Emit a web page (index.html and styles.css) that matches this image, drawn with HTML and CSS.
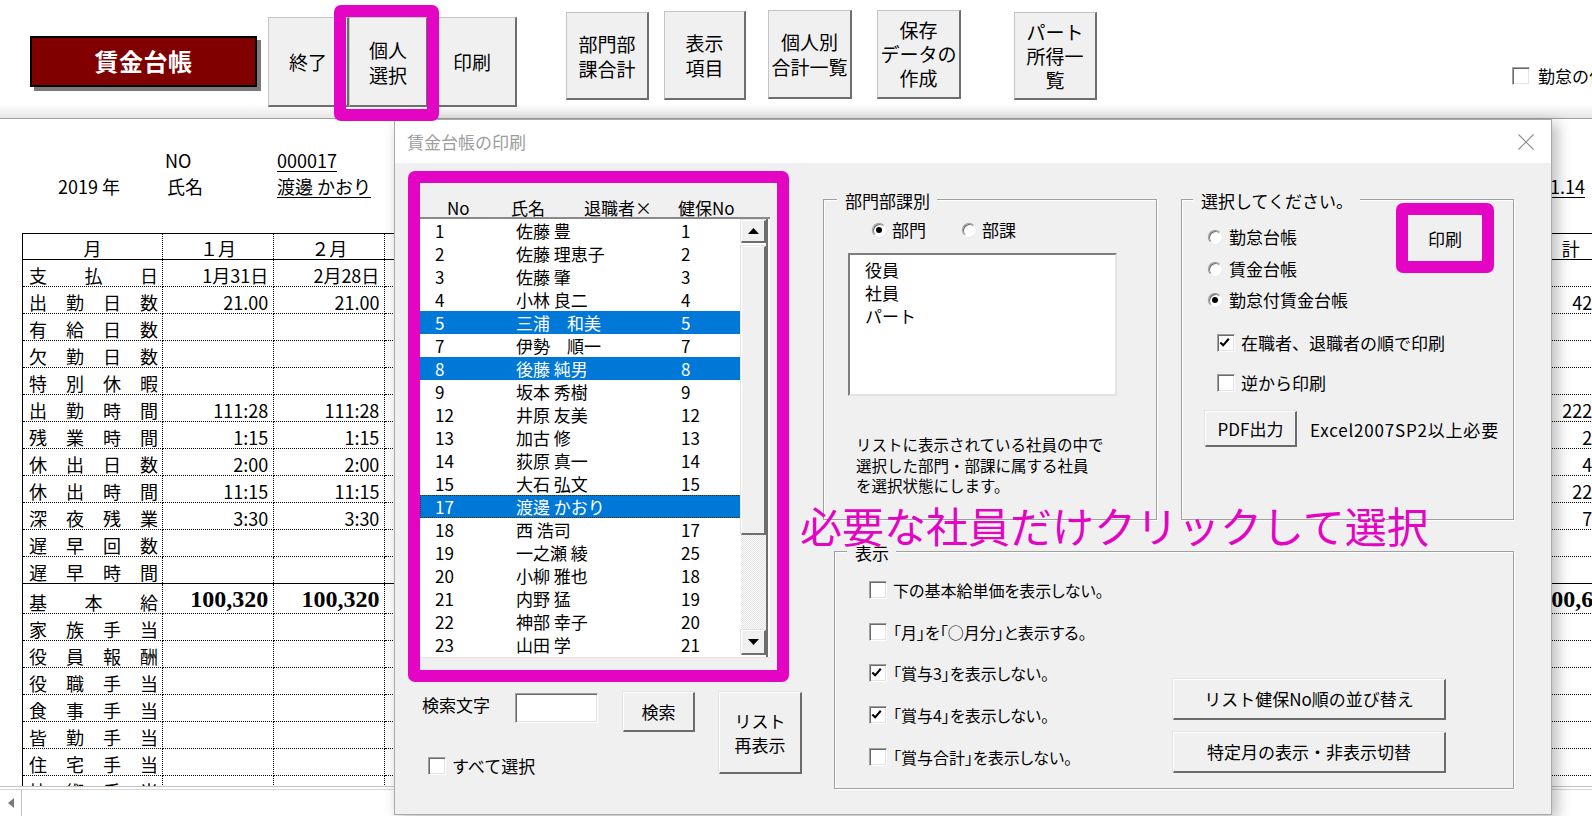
FILE: index.html
```html
<!DOCTYPE html>
<html lang="ja">
<head>
<meta charset="utf-8">
<title>賃金台帳</title>
<link rel="stylesheet" href="styles.css">
</head>
<body>
<div class="app">
  <header class="toolbar">
    <div class="title-badge">賃金台帳</div>
    <div class="tb-group">
      <button class="tb-btn w81">終了</button>
      <button class="tb-btn w79">個人<br>選択</button>
      <button class="tb-btn w89">印刷</button>
    </div>
    <button class="tb-btn b-bumon">部門部<br>課合計</button>
    <button class="tb-btn b-hyoji">表示<br>項目</button>
    <button class="tb-btn b-kojin">個人別<br>合計一覧</button>
    <button class="tb-btn b-hozon">保存<br>データの<br>作成</button>
    <button class="tb-btn b-part">パート<br>所得一<br>覧</button>
    <label class="top-check"><span class="cb"></span><span class="top-check-text">勤怠の付加表示</span></label>
  </header>

  <main class="sheet">
    <div class="sheet-head">
      <div class="sh-row"><span class="sh-no">NO</span><span class="u">000017</span></div>
      <div class="sh-row"><span class="sh-year">2019 年</span><span class="sh-name-l">氏名</span><span class="u">渡邊 かおり</span><span class="u sh-date">2019.11.14</span></div>
    </div>
    <table class="ledger">
      <colgroup>
        <col class="c-label"><col class="c-m"><col class="c-m"><col class="c-m"><col class="c-m"><col class="c-m"><col class="c-m"><col class="c-m"><col class="c-m"><col class="c-m"><col class="c-m"><col class="c-m"><col class="c-m"><col class="c-total">
      </colgroup>
      <thead>
        <tr><th>月</th><th>１月</th><th>２月</th><th>３月</th><th>４月</th><th>５月</th><th>６月</th><th>７月</th><th>８月</th><th>９月</th><th>10月</th><th>11月</th><th>12月</th><th class="th-total">合　計</th></tr>
      </thead>
      <tbody>
        <tr><td class="lbl">支払日</td><td class="num">1月31日</td><td class="num">2月28日</td><td></td><td></td><td></td><td></td><td></td><td></td><td></td><td></td><td></td><td></td><td class="num"></td></tr>
        <tr><td class="lbl">出勤日数</td><td class="num">21.00</td><td class="num">21.00</td><td></td><td></td><td></td><td></td><td></td><td></td><td></td><td></td><td></td><td></td><td class="num">42.00</td></tr>
        <tr><td class="lbl">有給日数</td><td></td><td></td><td></td><td></td><td></td><td></td><td></td><td></td><td></td><td></td><td></td><td></td><td></td></tr>
        <tr><td class="lbl">欠勤日数</td><td></td><td></td><td></td><td></td><td></td><td></td><td></td><td></td><td></td><td></td><td></td><td></td><td></td></tr>
        <tr><td class="lbl">特別休暇</td><td></td><td></td><td></td><td></td><td></td><td></td><td></td><td></td><td></td><td></td><td></td><td></td><td></td></tr>
        <tr><td class="lbl">出勤時間</td><td class="num">111:28</td><td class="num">111:28</td><td></td><td></td><td></td><td></td><td></td><td></td><td></td><td></td><td></td><td></td><td class="num">222:56</td></tr>
        <tr><td class="lbl">残業時間</td><td class="num">1:15</td><td class="num">1:15</td><td></td><td></td><td></td><td></td><td></td><td></td><td></td><td></td><td></td><td></td><td class="num">2:30</td></tr>
        <tr><td class="lbl">休出日数</td><td class="num">2:00</td><td class="num">2:00</td><td></td><td></td><td></td><td></td><td></td><td></td><td></td><td></td><td></td><td></td><td class="num">4:00</td></tr>
        <tr><td class="lbl">休出時間</td><td class="num">11:15</td><td class="num">11:15</td><td></td><td></td><td></td><td></td><td></td><td></td><td></td><td></td><td></td><td></td><td class="num">22:30</td></tr>
        <tr><td class="lbl">深夜残業</td><td class="num">3:30</td><td class="num">3:30</td><td></td><td></td><td></td><td></td><td></td><td></td><td></td><td></td><td></td><td></td><td class="num">7:00</td></tr>
        <tr><td class="lbl">遅早回数</td><td></td><td></td><td></td><td></td><td></td><td></td><td></td><td></td><td></td><td></td><td></td><td></td><td></td></tr>
        <tr><td class="lbl">遅早時間</td><td></td><td></td><td></td><td></td><td></td><td></td><td></td><td></td><td></td><td></td><td></td><td></td><td></td></tr>
        <tr class="kihon"><td class="lbl">基本給</td><td class="num money">100,320</td><td class="num money">100,320</td><td></td><td></td><td></td><td></td><td></td><td></td><td></td><td></td><td></td><td></td><td class="num money">200,640</td></tr>
        <tr><td class="lbl">家族手当</td><td></td><td></td><td></td><td></td><td></td><td></td><td></td><td></td><td></td><td></td><td></td><td></td><td></td></tr>
        <tr><td class="lbl">役員報酬</td><td></td><td></td><td></td><td></td><td></td><td></td><td></td><td></td><td></td><td></td><td></td><td></td><td></td></tr>
        <tr><td class="lbl">役職手当</td><td></td><td></td><td></td><td></td><td></td><td></td><td></td><td></td><td></td><td></td><td></td><td></td><td></td></tr>
        <tr><td class="lbl">食事手当</td><td></td><td></td><td></td><td></td><td></td><td></td><td></td><td></td><td></td><td></td><td></td><td></td><td></td></tr>
        <tr><td class="lbl">皆勤手当</td><td></td><td></td><td></td><td></td><td></td><td></td><td></td><td></td><td></td><td></td><td></td><td></td><td></td></tr>
        <tr><td class="lbl">住宅手当</td><td></td><td></td><td></td><td></td><td></td><td></td><td></td><td></td><td></td><td></td><td></td><td></td><td></td></tr>
        <tr><td class="lbl">技術手当</td><td></td><td></td><td></td><td></td><td></td><td></td><td></td><td></td><td></td><td></td><td></td><td></td><td></td></tr>
      </tbody>
    </table>
  </main>

  <footer class="hscroll">
    <span class="hs-left"><svg width="6" height="10" viewBox="0 0 6 10"><path d="M6 0 L0 5 L6 10Z" fill="#7a7a7a"/></svg></span>
    <span class="hs-track"></span>
  </footer>

  <div class="hl-ring hl-kojin"></div>

  <section class="dialog">
    <div class="dlg-title">
      <span class="dlg-title-text">賃金台帳の印刷</span>
      <span class="dlg-close"><svg width="16" height="16" viewBox="0 0 16 16"><path d="M0.5 0.5 L15.5 15.5 M15.5 0.5 L0.5 15.5" stroke="#8c8c8c" stroke-width="1.1" fill="none"/></svg></span>
    </div>
    <div class="dlg-body">
      <div class="col-left">
        <div class="ring list-ring">
          <div class="list-head"><span class="h-no">No</span><span class="h-name">氏名</span><span class="h-ret">退職者×</span><span class="h-kp">健保No</span></div>
          <div class="listbox">
            <div class="rows">
              <div class="row"><span class="c1">1</span><span class="c2">佐藤 豊</span><span class="c3">1</span></div>
              <div class="row"><span class="c1">2</span><span class="c2">佐藤 理恵子</span><span class="c3">2</span></div>
              <div class="row"><span class="c1">3</span><span class="c2">佐藤 肇</span><span class="c3">3</span></div>
              <div class="row"><span class="c1">4</span><span class="c2">小林 良二</span><span class="c3">4</span></div>
              <div class="row sel"><span class="c1">5</span><span class="c2">三浦　和美</span><span class="c3">5</span></div>
              <div class="row"><span class="c1">7</span><span class="c2">伊勢　順一</span><span class="c3">7</span></div>
              <div class="row sel"><span class="c1">8</span><span class="c2">後藤 純男</span><span class="c3">8</span></div>
              <div class="row"><span class="c1">9</span><span class="c2">坂本 秀樹</span><span class="c3">9</span></div>
              <div class="row"><span class="c1">12</span><span class="c2">井原 友美</span><span class="c3">12</span></div>
              <div class="row"><span class="c1">13</span><span class="c2">加古 修</span><span class="c3">13</span></div>
              <div class="row"><span class="c1">14</span><span class="c2">荻原 真一</span><span class="c3">14</span></div>
              <div class="row"><span class="c1">15</span><span class="c2">大石 弘文</span><span class="c3">15</span></div>
              <div class="row sel focus"><span class="c1">17</span><span class="c2">渡邊 かおり</span><span class="c3"></span></div>
              <div class="row"><span class="c1">18</span><span class="c2">西 浩司</span><span class="c3">17</span></div>
              <div class="row"><span class="c1">19</span><span class="c2">一之瀬 綾</span><span class="c3">25</span></div>
              <div class="row"><span class="c1">20</span><span class="c2">小柳 雅也</span><span class="c3">18</span></div>
              <div class="row"><span class="c1">21</span><span class="c2">内野 猛</span><span class="c3">19</span></div>
              <div class="row"><span class="c1">22</span><span class="c2">神部 幸子</span><span class="c3">20</span></div>
              <div class="row"><span class="c1">23</span><span class="c2">山田 学</span><span class="c3">21</span></div>
            </div>
            <div class="vscroll">
              <div class="sb-btn sb-up"><svg width="11" height="6" viewBox="0 0 11 6"><path d="M0 6 L5.5 0 L11 6Z" fill="#000"/></svg></div>
              <div class="sb-thumb"></div>
              <div class="sb-track"></div>
              <div class="sb-btn sb-down"><svg width="11" height="6" viewBox="0 0 11 6"><path d="M0 0 L5.5 6 L11 0Z" fill="#000"/></svg></div>
            </div>
          </div>
        </div>
        <div class="search">
          <div class="search-main">
            <div class="search-line">
              <span class="lbl-search">検索文字</span>
              <span class="textbox"></span>
              <button class="btn btn-search">検索</button>
            </div>
            <label class="check check-all"><span class="cb"></span><span class="check-text">すべて選択</span></label>
          </div>
          <button class="btn btn-relist">リスト<br>再表示</button>
        </div>
      </div>

      <div class="col-right">
        <div class="groups-top">
          <div class="group g-bumon">
            <div class="legend lg-bumon">部門部課別</div>
            <div class="radio-row">
              <label class="radio r-bumon"><span class="rb on"></span>部門</label>
              <label class="radio"><span class="rb"></span>部課</label>
            </div>
            <div class="dept-list">
              <div class="dept-item">役員</div>
              <div class="dept-item">社員</div>
              <div class="dept-item">パート</div>
            </div>
            <p class="desc">リストに表示されている社員の中で<br>選択した部門・部課に属する社員<br>を選択状態にします。</p>
          </div>
          <div class="group g-select">
            <div class="legend lg-select">選択してください。</div>
            <div class="sel-top">
              <div class="sel-radios">
                <label class="radio sel-radio"><span class="rb"></span>勤怠台帳</label>
                <label class="radio sel-radio"><span class="rb"></span>賃金台帳</label>
                <label class="radio sel-radio"><span class="rb on"></span>勤怠付賃金台帳</label>
              </div>
              <div class="ring ring-print"><div class="print-btn">印刷</div></div>
            </div>
            <label class="check chk-row chk-1"><span class="cb on"><svg width="16" height="16" viewBox="0 0 16 16"><path d="M2.5 7.5 L5.5 10.5 L11.5 3.5" fill="none" stroke="#000" stroke-width="2.2"/></svg></span><span class="check-text">在職者、退職者の順で印刷</span></label>
            <label class="check chk-row chk-2"><span class="cb"></span><span class="check-text">逆から印刷</span></label>
            <div class="pdf-row">
              <button class="btn btn-pdf">PDF出力</button>
              <span class="excel">Excel2007SP2以上必要</span>
            </div>
          </div>
        </div>

        <div class="group g-view">
          <div class="legend lg-view">表示</div>
          <div class="view-body">
            <div class="view-checks">
              <label class="check view-check"><span class="cb"></span><span class="check-text">下の基本給単価を表示しない。</span></label>
              <label class="check view-check"><span class="cb"></span><span class="check-text">「月」を「○月分」と表示する。</span></label>
              <label class="check view-check"><span class="cb on"><svg width="16" height="16" viewBox="0 0 16 16"><path d="M2.5 7.5 L5.5 10.5 L11.5 3.5" fill="none" stroke="#000" stroke-width="2.2"/></svg></span><span class="check-text">「賞与3」を表示しない。</span></label>
              <label class="check view-check"><span class="cb on"><svg width="16" height="16" viewBox="0 0 16 16"><path d="M2.5 7.5 L5.5 10.5 L11.5 3.5" fill="none" stroke="#000" stroke-width="2.2"/></svg></span><span class="check-text">「賞与4」を表示しない。</span></label>
              <label class="check view-check"><span class="cb"></span><span class="check-text">「賞与合計」を表示しない。</span></label>
            </div>
            <div class="view-btns">
              <button class="btn btn-wide">リスト健保No順の並び替え</button>
              <button class="btn btn-wide">特定月の表示・非表示切替</button>
            </div>
          </div>
        </div>
      </div>
    </div>
    <div class="annot">必要な社員だけクリックして選択</div>
  </section>
</div>
</body>
</html>
```

FILE: styles.css
```css
* { box-sizing: border-box; }
html, body { margin: 0; padding: 0; }
body {
  width: 1592px;
  height: 816px;
  overflow: hidden;
  background: #fff;
  color: #000;
  font-family: "Noto Sans CJK JP", "Noto Sans", sans-serif;
}
button { font-family: inherit; color: #000; padding: 0; margin: 0; cursor: default; }

.app {
  position: relative;
  width: 1592px;
  height: 816px;
  overflow: hidden;
  display: flex;
  flex-direction: column;
}

/* ---------- toolbar ---------- */
.toolbar {
  flex: 0 0 119px;
  display: flex;
  align-items: flex-start;
  border-bottom: 1px solid #a0a0a0;
  background: linear-gradient(#fff 0, #fff 104px, #e6e6e6 118px);
}
.toolbar > * { flex-shrink: 0; }

.title-badge {
  margin: 36px 0 0 30px;
  width: 227px;
  height: 51px;
  background: #800000;
  border: 2px solid #000;
  box-shadow: 4px 4px 0 #7a7a7a;
  color: #fff;
  font-weight: 700;
  font-size: 24px;
  line-height: 46px;
  text-align: center;
  letter-spacing: 0.5px;
}

.tb-group { display: flex; margin: 17px 0 0 11px; }

.tb-btn {
  display: flex;
  align-items: center;
  justify-content: center;
  text-align: center;
  background: #f0f0f0;
  border-style: solid;
  border-width: 1px 2px 2px 1px;
  border-color: #c4c4c4 #6e6e6e #6e6e6e #c4c4c4;
  font-size: 19px;
  line-height: 25px;
  height: 90px;
}
.w81 { width: 81px; }
.w79 { width: 79px; }
.w89 { width: 89px; }
.b-bumon { margin: 12px 0 0 49px; width: 83px; height: 88px; }
.b-hyoji { margin: 11px 0 0 15px; width: 82px; height: 89px; }
.b-kojin { margin: 10px 0 0 22px; width: 84px; height: 89px; }
.b-hozon { margin: 10px 0 0 25px; width: 84px; height: 89px; line-height: 24px; }
.b-part  { margin: 12px 0 0 53px; width: 83px; height: 88px; line-height: 24px; }

.top-check {
  margin: 67px 0 0 415px;
  display: flex;
  align-items: center;
  font-size: 17px;
  line-height: 18px;
  white-space: nowrap;
}
.top-check-text { margin-left: 8px; }

/* checkbox & radio */
.cb {
  flex: 0 0 18px;
  width: 18px;
  height: 18px;
  display: inline-flex;
  align-items: center;
  justify-content: center;
  background: #fff;
  border: 1px solid;
  border-color: #a0a0a0 #fff #fff #a0a0a0;
  box-shadow: inset 1px 1px 0 #6a6a6a, inset -1px -1px 0 #e3e3e3;
}
.cb svg { margin: 0 1px 1px 0; }

.rb {
  position: relative;
  flex: 0 0 14px;
  width: 14px;
  height: 14px;
  border-radius: 50%;
  background: #fff;
  border: 1px solid;
  border-color: #9a9a9a #fff #fff #9a9a9a;
  box-shadow: inset 1px 1px 0 #6a6a6a, 0 0 0 0.5px #e3e3e3;
}
.rb.on::after {
  content: "";
  position: absolute;
  left: 3px;
  top: 3px;
  width: 6px;
  height: 6px;
  border-radius: 50%;
  background: #000;
}

/* ---------- sheet ---------- */
.sheet {
  flex: 1 1 auto;
  min-height: 0;
  overflow: hidden;
  font-size: 18px;
}
.sheet-head { padding-top: 28px; }
.sh-row {
  display: flex;
  height: 26px;
  line-height: 26px;
  white-space: nowrap;
}
.sh-no { margin-left: 165px; width: 112px; }
.sh-year { margin-left: 58px; width: 109px; }
.sh-name-l { width: 110px; }
.sh-date { margin-left: auto; margin-right: 7px; }
.u {
  text-decoration: underline;
  text-decoration-thickness: 1px;
  text-underline-offset: 3px;
}

.ledger {
  margin: 34px 0 0 22px;
  border-collapse: collapse;
  table-layout: fixed;
  width: 1600px;
}
.c-label { width: 140px; }
.c-m { width: 111.2px; }
.c-total { width: 126px; }

.ledger th {
  font-weight: 400;
  height: 26px;
  padding: 0;
  line-height: 22px;
  vertical-align: bottom;
  border: 1px dotted #000;
  border-top: 1px solid #000;
  border-bottom: 1px solid #000;
  white-space: nowrap;
}
.ledger th:first-child { border-left: 1px solid #000; }
.ledger th.th-total { padding-right: 14px; }
.ledger td {
  height: 27px;
  padding: 0 5px;
  line-height: 22px;
  vertical-align: bottom;
  border: 1px dotted #000;
  white-space: nowrap;
  overflow: hidden;
}
.ledger td.lbl {
  border-left: 1px solid #000;
  padding: 0 4px 0 6px;
  text-align: justify;
  text-align-last: justify;
}
.ledger td.num { text-align: right; }
.ledger tr.kihon td { border-top: 1px solid #000; height: 30px; }
.ledger td.money {
  font-family: "Liberation Serif", serif;
  font-weight: 700;
  font-size: 24px;
  line-height: 27px;
}

/* ---------- bottom horizontal scrollbar ---------- */
.hscroll {
  flex: 0 0 30px;
  display: flex;
  border-top: 1px solid #c3c3c3;
  background: #fff;
  box-shadow: inset 0 2px 0 #fff, inset 0 3px 0 #d6d6d6;
}
.hs-left {
  width: 22px;
  display: flex;
  align-items: center;
  justify-content: center;
  border-right: 1px solid #c3c3c3;
  margin-top: 3px;
}
.hs-track { flex: 1; }

/* ---------- highlight rings ---------- */
.ring {
  border: 12px solid #e304c4;
  border-radius: 7px;
}
.hl-ring {
  position: absolute;
  border: 12px solid #e304c4;
  border-radius: 7px;
  z-index: 10;
}
.hl-kojin { left: 334px; top: 5px; width: 105px; height: 116px; }

/* ---------- dialog ---------- */
.dialog {
  position: absolute;
  left: 394px;
  top: 119px;
  width: 1158px;
  height: 696px;
  z-index: 5;
  display: flex;
  flex-direction: column;
  background: #f0f0f0;
  border: 1px solid #aaaaaa;
  box-shadow: 5px 4px 14px rgba(0, 0, 0, 0.28);
  font-size: 17px;
}
.dlg-title {
  flex: 0 0 43px;
  display: flex;
  align-items: center;
  background: #fff;
}
.dlg-title-text {
  margin-left: 12px;
  font-size: 17px;
  color: #9d9d9d;
}
.dlg-close { margin: 0 17px 0 auto; display: flex; }

.dlg-body {
  flex: 1;
  display: flex;
  align-items: flex-start;
  padding: 8px 0 0 13px;
}

.col-left { width: 395px; flex-shrink: 0; }

.list-ring { width: 381px; height: 511px; }
.list-head {
  height: 34px;
  padding-top: 15px;
  line-height: 19px;
  display: flex;
  white-space: nowrap;
}
.h-no { margin-left: 27px; width: 64px; }
.h-name { width: 73px; }
.h-ret { width: 94px; }

.listbox {
  width: 350px;
  height: 441px;
  display: flex;
  background: #fff;
  border-top: 2px solid #8a8a8a;
  border-bottom: 1px solid #e3e3e3;
}
.rows { width: 321px; flex-shrink: 0; }
.row {
  height: 23px;
  line-height: 23px;
  display: flex;
  white-space: nowrap;
}
.row .c1 { padding-left: 15px; width: 96px; }
.row .c2 { width: 165px; }
.row.sel { background: #0078d7; color: #fff; }
.row.focus { outline: 1px dotted #4a2a00; outline-offset: -1px; }

.vscroll {
  width: 27px;
  display: flex;
  flex-direction: column;
  padding-top: 1px;
  padding-bottom: 2px;
  border-right: 2px solid #6e6e6e;
}
.sb-btn, .sb-thumb {
  background: #f0f0f0;
  border-style: solid;
  border-width: 1px 2px 2px 1px;
  border-color: #fff #6e6e6e #6e6e6e #fff;
  box-shadow: -1px -1px 0 #e3e3e3;
}
.sb-btn {
  display: flex;
  align-items: center;
  justify-content: center;
}
.sb-up { height: 23px; }
.sb-thumb { height: 289px; margin-top: 3px; }
.sb-track {
  flex: 1;
  background: repeating-conic-gradient(#fdfdfd 0 25%, #e4e4e4 0 50%) 0 0 / 2px 2px;
}
.sb-down { height: 25px; }

.search { display: flex; margin-top: 10px; }
.search-main { width: 311px; }
.search-line { display: flex; height: 40px; }
.lbl-search {
  margin: 2px 0 0 14px;
  width: 70px;
  line-height: 22px;
  white-space: nowrap;
}
.textbox {
  margin: 1px 0 0 23px;
  width: 83px;
  height: 30px;
  background: #fff;
  border: 1px solid;
  border-color: #a0a0a0 #fff #fff #a0a0a0;
  box-shadow: inset 1px 1px 0 #6a6a6a, inset -1px -1px 0 #e3e3e3;
}

.btn {
  display: flex;
  align-items: center;
  justify-content: center;
  text-align: center;
  background: #f0f0f0;
  border-style: solid;
  border-width: 1px 2px 2px 1px;
  border-color: #fff #6b6b6b #6b6b6b #fff;
  box-shadow: -1px -1px 0 #e3e3e3;
  font-size: 17px;
  line-height: 24px;
  white-space: nowrap;
}
.btn-search { margin-left: 25px; width: 72px; height: 40px; }
.btn-relist { width: 83px; height: 82px; }

.check {
  display: flex;
  align-items: center;
  white-space: nowrap;
}
.check-text { margin-left: 6px; line-height: 22px; }
.check-all { margin: 25px 0 0 20px; height: 18px; }

.col-right { width: 691px; margin-left: 20px; flex-shrink: 0; }
.groups-top { display: flex; gap: 24px; margin-top: 28px; }

.group {
  border: 1px solid #a0a0a0;
  box-shadow: inset 1px 1px 0 #fff, 1px 1px 0 #fff;
}
.legend {
  width: fit-content;
  margin-top: -9px;
  padding: 0 7px 0 8px;
  background: #f0f0f0;
  line-height: 20px;
  white-space: nowrap;
}
.lg-bumon { margin-left: 13px; }
.lg-select { margin-left: 11px; }
.lg-view { margin-left: 12px; }

.g-bumon { width: 334px; height: 321px; }
.g-select { width: 333px; height: 321px; }

.radio-row {
  display: flex;
  height: 22px;
  align-items: center;
  margin: 8px 0 0 48px;
}
.radio {
  display: flex;
  align-items: center;
  white-space: nowrap;
  line-height: 22px;
}
.radio .rb { margin-right: 6px; }
.r-bumon { width: 90px; }

.dept-list {
  margin: 12px 0 0 24px;
  width: 269px;
  height: 143px;
  background: #fff;
  border: 2px solid;
  border-color: #7e7e7e #e3e3e3 #e3e3e3 #7e7e7e;
  padding-top: 3px;
}
.dept-item { padding-left: 15px; height: 23px; line-height: 23px; }

.desc {
  margin: 38px 0 0 32px;
  font-size: 15.5px;
  line-height: 20.5px;
  white-space: nowrap;
}

.sel-top { display: flex; }
.sel-radios { margin: 15px 0 0 26px; }
.sel-radio { height: 22px; }
.sel-radio + .sel-radio { margin-top: 9.5px; }
.sel-radio .rb { margin-right: 7px; }
.ring-print {
  margin: -8px 19px 0 auto;
  width: 98px;
  height: 70px;
  flex-shrink: 0;
}
.print-btn {
  height: 100%;
  display: flex;
  align-items: center;
  justify-content: center;
  background: #f0f0f0;
}

.chk-row { margin-left: 35px; height: 18px; }
.chk-1 { margin-top: 23px; }
.chk-2 { margin-top: 22px; }

.pdf-row {
  display: flex;
  align-items: center;
  margin: 19px 0 0 23px;
}
.btn-pdf { width: 92px; height: 36px; }
.excel { margin-left: 13px; white-space: nowrap; letter-spacing: 0.8px; }

.g-view {
  margin: 31px 0 0 11px;
  width: 680px;
  height: 238px;
}
.view-body { display: flex; }
.view-checks {
  margin: 6px 0 0 34px;
  font-size: 16px;
  font-feature-settings: "palt";
}
.view-check { height: 41.75px; }
.view-btns {
  margin: 116px 67px 0 auto;
  display: flex;
  flex-direction: column;
  gap: 12px;
}
.btn-wide { width: 273px; height: 41px; }

.annot {
  position: absolute;
  left: 405px;
  top: 384px;
  font-size: 42px;
  line-height: 42px;
  color: #e304c4;
  white-space: nowrap;
  z-index: 3;
}
```
